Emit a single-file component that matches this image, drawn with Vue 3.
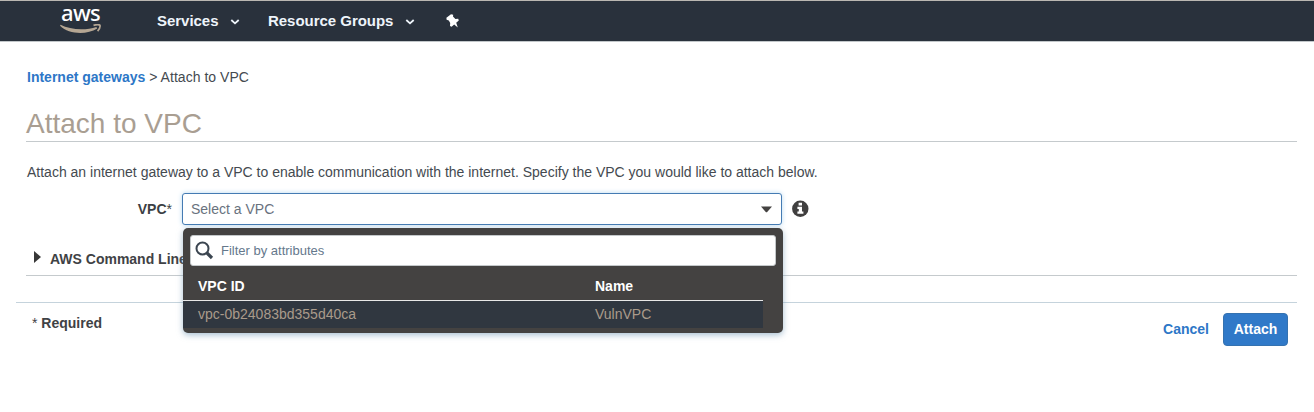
<script setup>
const columns = ['VPC ID', 'Name']
const vpcs = [{ id: 'vpc-0b24083bd355d40ca', name: 'VulnVPC' }]
</script>

<template>
  <div class="page">
    <header class="nav">
      <div class="logo">
        <span class="logo-text">aws</span>
        <svg class="smile" width="42" height="11" viewBox="0 0 42 11">
          <path d="M.6 .8 C10 6 26 6.6 36.4 3 L37.2 4.6 C27 11 9 10.8 0 1.8 Z" fill="#b5a693" />
          <path d="M33.5 1.4 C36.5 .4 39.2 .5 40 1.4 C40.3 3.2 39.3 5.4 37.6 7.2" fill="none" stroke="#b5a693" stroke-width="1.7" />
        </svg>
      </div>
      <span class="nav-item services">Services</span>
      <svg class="chev c1" width="10" height="6" viewBox="0 0 10 6"><path d="M1.3 1 L5 4.4 L8.7 1" /></svg>
      <span class="nav-item groups">Resource Groups</span>
      <svg class="chev c2" width="10" height="6" viewBox="0 0 10 6"><path d="M1.3 1 L5 4.4 L8.7 1" /></svg>
      <svg class="pin" width="14" height="14" viewBox="0 0 14 14">
        <path d="M5 .2 L7.2 .8 L7 2.6 L9.4 5 L12.2 4.8 L12.8 6.6 L10.2 8.8 L11.8 13.6 L8.2 10.4 L5.6 12.8 L4 12 L4.2 9 L2.8 6.4 L.6 5.8 L.4 3.8 Z" fill="#fff" />
      </svg>
    </header>

    <main class="content">
      <nav class="crumbs"><a>Internet gateways</a><span class="rest"> &gt; Attach to VPC</span></nav>
      <h1><span>Attach to VPC</span></h1>
      <p class="desc">Attach an internet gateway to a VPC to enable communication with the internet. Specify the VPC you would like to attach below.</p>

      <div class="field">
        <label>VPC<span>*</span></label>
        <div class="select">
          <span class="placeholder">Select a VPC</span>
          <svg width="11" height="7" viewBox="0 0 11 7"><path d="M0 .5 H11 L6 6.3 H5 Z" fill="#444241" /></svg>
          <div class="menu">
            <div class="filter">
              <svg width="19" height="19" viewBox="0 0 19 19" fill="none" stroke="#3b4550">
                <circle cx="7.5" cy="7.5" r="6" stroke-width="2" />
                <path d="M12 12 L17 17" stroke-width="3.2" />
              </svg>
              <span>Filter by attributes</span>
            </div>
            <div class="row head"><span v-for="c in columns" :key="c">{{ c }}</span></div>
            <div v-for="v in vpcs" :key="v.id" class="row item"><span>{{ v.id }}</span><span>{{ v.name }}</span></div>
          </div>
        </div>
        <svg class="info" width="17" height="17" viewBox="0 0 17 17">
          <circle cx="8.3" cy="8.7" r="8.2" fill="#403f3f" />
          <path d="M6.6 2.8 H10 V5.5 H6.6 Z M5.4 6.8 H10 V11.6 H11.4 V13.8 H5.4 V11.6 H6.8 V9 H5.4 Z" fill="#fff" />
        </svg>
      </div>

      <div class="cli">
        <svg width="7" height="12" viewBox="0 0 7 12"><path d="M0 0 L7 6 L0 12 Z" fill="#383838" /></svg>
        <span>AWS Command Line</span>
      </div>
    </main>

    <footer>
      <span class="required"><i>*</i> Required</span>
      <a class="cancel">Cancel</a>
      <button>Attach</button>
    </footer>
  </div>
</template>

<style>
body { background: #fff; overflow: hidden; }
</style>

<style scoped>
.page { width: 1314px; height: 412px; overflow: hidden; background: #fff; color: #444a50; font: 14px/20px "Liberation Sans", Arial, sans-serif; }
* { box-sizing: border-box; white-space: nowrap; }
.nav { height: 42px; display: flex; align-items: flex-start; background: #29313c; border-top: 1px solid #bab7b2; border-bottom: 1px solid #c2c7ca; color: #eef4fa; }
.logo { width: 43px; margin-left: 60px; height: 40px; display: flex; flex-direction: column; }
.logo-text { font: 500 22px/24px "Noto Sans", sans-serif; height: 24px; margin: -1px 0 0 1px; color: #fff; letter-spacing: -0.7px; }
.smile { display: block; }
.nav-item { font: bold 15px/20px "Liberation Sans", Arial, sans-serif; margin-top: 10px; letter-spacing: -0.03px; }
.services { margin-left: 54px; width: 73px; }
.groups { margin-left: 28px; width: 137px; }
.chev { margin-top: 18px; fill: none; stroke: #eef4fa; stroke-width: 1.8; }
.c1 { margin-left: 0; }
.c2 { margin-left: 0; }
.pin { margin: 13px 0 0 31px; }

.content { padding: 0 17px 0 26px; }
.crumbs { margin: 25px 0 0 1px; height: 20px; }
a { color: #2d77c7; font-weight: bold; }
.rest { white-space: pre; letter-spacing: 0.04px; }
h1 { margin: 18px 0 0; height: 37px; border-bottom: 1px solid #c5cacd; font-size: 28px; line-height: 37px; font-weight: normal; color: #a99e92; }
.desc { margin: 20px 0 0 1px; height: 20px; }
.field { display: flex; margin-top: 11px; height: 32px; align-items: center; }
label { width: 146px; text-align: right; font-weight: bold; margin-right: 10px; color: #3c3f44; }
label span { font-weight: normal; }
.select { position: relative; width: 600px; height: 32px; border: 1px solid #457bb3; border-radius: 3px; box-shadow: 0 0 5px #b9daf0; display: flex; align-items: center; justify-content: space-between; padding: 0 9px 0 8px; background: #fff; }
.placeholder { color: #69727e; }
.menu { position: absolute; left: 0; top: 34px; width: 600px; height: 105px; background: #444241; border-radius: 5px; padding: 7px 7px 0; box-shadow: 0 2px 6px rgba(110, 150, 180, .6); z-index: 2; }
.filter { height: 31px; background: #fff; border: 1px solid #c4c8ca; border-radius: 3px; display: flex; align-items: center; padding-left: 4px; font-size: 13px; color: #65788c; }
.filter span { margin-left: 7px; }
.row { display: grid; grid-template-columns: 397px 1fr; width: 580px; margin-left: -7px; padding-left: 15px; }
.head { height: 35px; padding-top: 10px; border-bottom: 1px solid #e8e8e8; font-weight: bold; color: #fff; }
.item { height: 27px; line-height: 27px; background: #303740; color: #aa9b8b; }
.info { margin: -1px 0 0 10px; }
.cli { height: 51px; display: flex; align-items: flex-start; border-bottom: 1px solid #c5cacd; padding: 24px 0 0 8px; font-weight: bold; color: #3f4245; }
.cli svg { margin-top: 2px; }
.cli span { margin-left: 9px; }
footer { margin: 26px 17px 0 16px; border-top: 1px solid #c5d3dc; display: flex; align-items: flex-start; padding: 10px 9px 0 16px; }
.required { font-weight: bold; color: #3f4245; flex: 1; }
.required i { font-style: normal; font-weight: normal; }
.cancel { margin: 6px 14px 0 0; }
button { width: 65px; height: 33px; padding: 0 0 2px; border: 1px solid #3572b0; border-radius: 4px; background: #3079c8; color: #fff; font: bold 14px "Liberation Sans", Arial, sans-serif; }
</style>
